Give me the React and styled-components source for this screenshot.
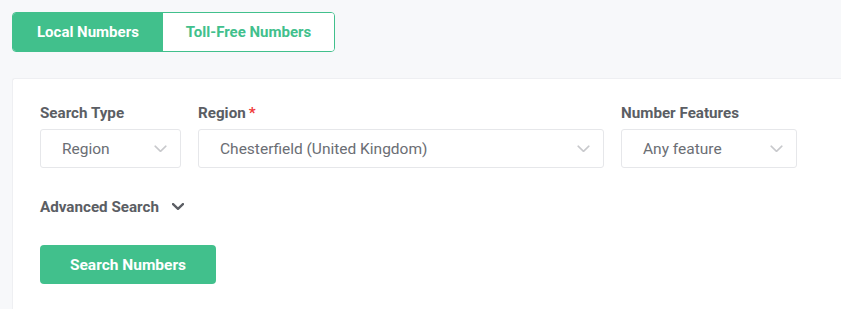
import React from "react";
import styled, { createGlobalStyle } from "styled-components";

const Global = createGlobalStyle`
  html, body { margin: 0; padding: 0; background: #f7f8fa; }
  body { font-family: Roboto, "Liberation Sans", Arial, sans-serif; }
  * { box-sizing: border-box; }
`;

const Page = styled.div`
  padding: 12px 0 0 12px;
  width: 841px;
  height: 309px;
  overflow: hidden;
`;

const Tabs = styled.div`
  display: inline-flex;
  border: 1px solid #41c08c;
  border-radius: 4px;
  overflow: hidden;
  height: 40px;
`;

const Tab = styled.button`
  border: none;
  margin: 0;
  padding: 0 ${(p) => (p.$active ? 24 : 23)}px;
  font-family: inherit;
  font-size: 15px;
  font-weight: 700;
  background: ${(p) => (p.$active ? "#41c08c" : "#ffffff")};
  color: ${(p) => (p.$active ? "#ffffff" : "#41c08c")};
  cursor: pointer;
`;

const Card = styled.div`
  margin-top: 26px;
  background: #fff;
  border: 1px solid #eeeff2;
  border-right: none;
  border-radius: 3px 0 0 0;
  padding: 25px 0 0 27px;
  height: 260px;
`;

const FieldsRow = styled.div`
  display: flex;
  gap: 17px;
`;

const Field = styled.div`
  display: flex;
  flex-direction: column;
  gap: 7px;
  width: ${(p) => p.$w}px;
`;

const Label = styled.label`
  font-size: 15.2px;
  font-weight: 700;
  color: #5b5e64;
  line-height: 18px;
  display: flex;
  gap: 3px;
`;

const Req = styled.span`
  color: #f03a3a;
`;

const Select = styled.div`
  height: 39px;
  border: 1px solid #e6e7ea;
  border-radius: 3px;
  display: flex;
  align-items: center;
  justify-content: space-between;
  padding: 0 13px 0 21px;
  font-size: 15.5px;
  color: #6b6e74;
`;

const Chevron = ({ color = "#c8c9cc", w = 13, sw = 1.6 }) => (
  <svg width={w} height={w * 0.6} viewBox="0 0 13 8" fill="none">
    <path d="M1 1.2 L6.5 6.5 L12 1.2" stroke={color} strokeWidth={sw} strokeLinecap="round" strokeLinejoin="round" />
  </svg>
);

const Advanced = styled.div`
  margin-top: 30px;
  display: flex;
  align-items: center;
  gap: 13px;
  font-size: 15.2px;
  font-weight: 700;
  color: #5b5e64;
  height: 18px;
`;

const Button = styled.button`
  margin-top: 29px;
  width: 176px;
  height: 39px;
  border: none;
  border-radius: 4px;
  background: #41c08c;
  color: #fff;
  font-family: inherit;
  font-size: 15.5px;
  font-weight: 700;
`;

export default function App() {
  return (
    <>
      <Global />
      <Page>
        <Tabs>
          <Tab $active>Local Numbers</Tab>
          <Tab>Toll-Free Numbers</Tab>
        </Tabs>
        <Card>
          <FieldsRow>
            <Field $w={141}>
              <Label>Search Type</Label>
              <Select>
                Region
                <Chevron />
              </Select>
            </Field>
            <Field $w={406}>
              <Label>
                Region<Req>*</Req>
              </Label>
              <Select>
                Chesterfield (United Kingdom)
                <Chevron />
              </Select>
            </Field>
            <Field $w={176}>
              <Label>Number Features</Label>
              <Select>
                Any feature
                <Chevron />
              </Select>
            </Field>
          </FieldsRow>
          <Advanced>
            Advanced Search
            <Chevron color="#5b5e64" w={12} sw={2.6} />
          </Advanced>
          <Button>Search Numbers</Button>
        </Card>
      </Page>
    </>
  );
}
